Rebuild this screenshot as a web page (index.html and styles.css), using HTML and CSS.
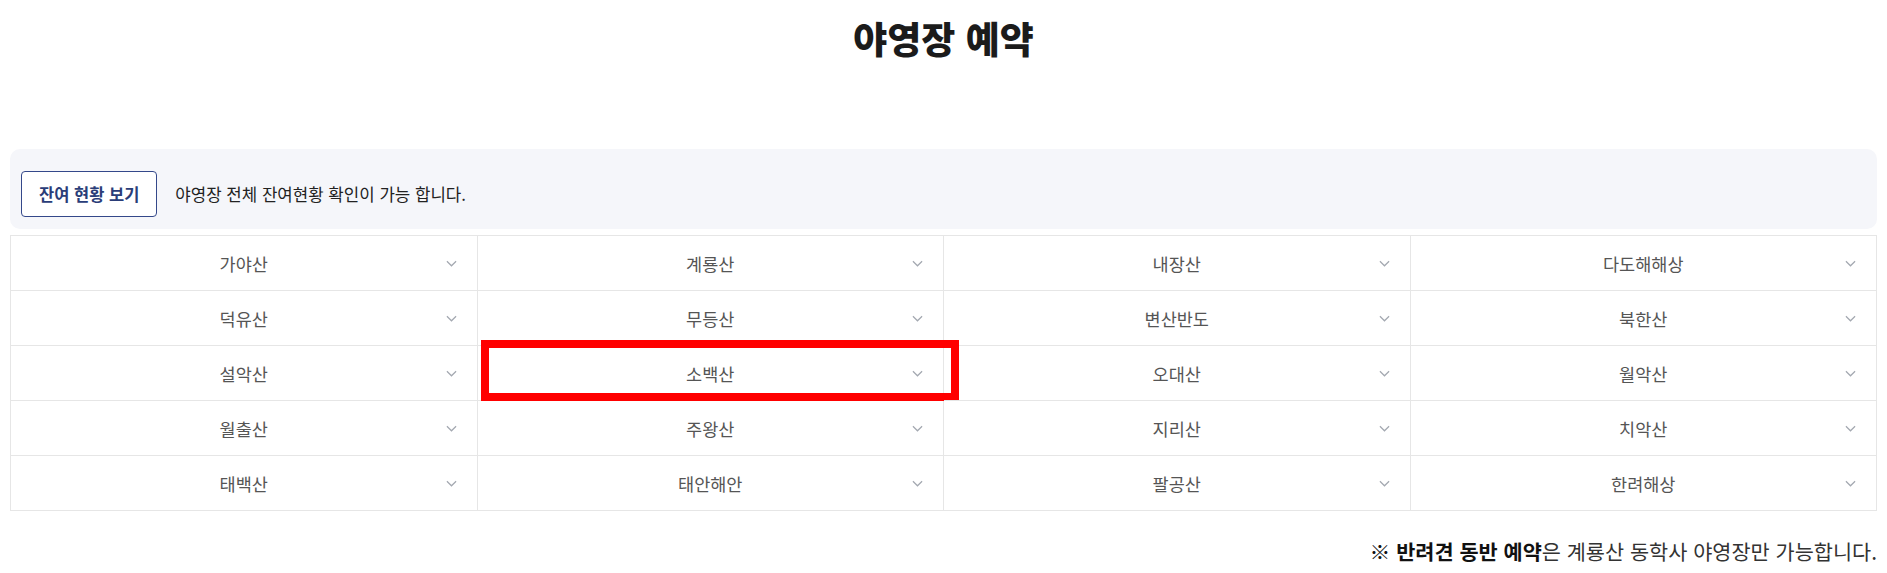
FILE: index.html
```html
<!DOCTYPE html>
<html lang="ko">
<head>
  <meta charset="UTF-8">
  <title>야영장 예약</title>
  <meta name="viewport" content="width=device-width, initial-scale=1">
  <link rel="stylesheet" href="styles.css">
</head>
<body>
  <h1>야영장 예약</h1>

  <div class="notice-bar">
    <button type="button" class="status-btn">잔여 현황 보기</button>
    <span class="notice-text">야영장 전체 잔여현황 확인이 가능 합니다.</span>
  </div>

  <div class="park-grid">
    <div class="cell"><span class="name">가야산</span><svg class="chev" viewBox="0 0 12 7"><path d="M1 1l5 5 5-5"/></svg></div>
    <div class="cell"><span class="name">계룡산</span><svg class="chev" viewBox="0 0 12 7"><path d="M1 1l5 5 5-5"/></svg></div>
    <div class="cell"><span class="name">내장산</span><svg class="chev" viewBox="0 0 12 7"><path d="M1 1l5 5 5-5"/></svg></div>
    <div class="cell"><span class="name">다도해해상</span><svg class="chev" viewBox="0 0 12 7"><path d="M1 1l5 5 5-5"/></svg></div>

    <div class="cell"><span class="name">덕유산</span><svg class="chev" viewBox="0 0 12 7"><path d="M1 1l5 5 5-5"/></svg></div>
    <div class="cell"><span class="name">무등산</span><svg class="chev" viewBox="0 0 12 7"><path d="M1 1l5 5 5-5"/></svg></div>
    <div class="cell"><span class="name">변산반도</span><svg class="chev" viewBox="0 0 12 7"><path d="M1 1l5 5 5-5"/></svg></div>
    <div class="cell"><span class="name">북한산</span><svg class="chev" viewBox="0 0 12 7"><path d="M1 1l5 5 5-5"/></svg></div>

    <div class="cell"><span class="name">설악산</span><svg class="chev" viewBox="0 0 12 7"><path d="M1 1l5 5 5-5"/></svg></div>
    <div class="cell highlighted"><span class="name">소백산</span><svg class="chev" viewBox="0 0 12 7"><path d="M1 1l5 5 5-5"/></svg><span class="mark"></span></div>
    <div class="cell"><span class="name">오대산</span><svg class="chev" viewBox="0 0 12 7"><path d="M1 1l5 5 5-5"/></svg></div>
    <div class="cell"><span class="name">월악산</span><svg class="chev" viewBox="0 0 12 7"><path d="M1 1l5 5 5-5"/></svg></div>

    <div class="cell"><span class="name">월출산</span><svg class="chev" viewBox="0 0 12 7"><path d="M1 1l5 5 5-5"/></svg></div>
    <div class="cell"><span class="name">주왕산</span><svg class="chev" viewBox="0 0 12 7"><path d="M1 1l5 5 5-5"/></svg></div>
    <div class="cell"><span class="name">지리산</span><svg class="chev" viewBox="0 0 12 7"><path d="M1 1l5 5 5-5"/></svg></div>
    <div class="cell"><span class="name">치악산</span><svg class="chev" viewBox="0 0 12 7"><path d="M1 1l5 5 5-5"/></svg></div>

    <div class="cell"><span class="name">태백산</span><svg class="chev" viewBox="0 0 12 7"><path d="M1 1l5 5 5-5"/></svg></div>
    <div class="cell"><span class="name">태안해안</span><svg class="chev" viewBox="0 0 12 7"><path d="M1 1l5 5 5-5"/></svg></div>
    <div class="cell"><span class="name">팔공산</span><svg class="chev" viewBox="0 0 12 7"><path d="M1 1l5 5 5-5"/></svg></div>
    <div class="cell"><span class="name">한려해상</span><svg class="chev" viewBox="0 0 12 7"><path d="M1 1l5 5 5-5"/></svg></div>
  </div>

  <p class="pet-note"><strong>※ 반려견 동반 예약</strong>은 계룡산 동학사 야영장만 가능합니다.</p>
</body>
</html>
```

FILE: styles.css
```css
body {
  font-family: "Noto Sans CJK KR", "Noto Sans", sans-serif;
  margin: 0;
  padding: 0 10px;
  background: #fff;
  color: #222;
}
h1 {
  text-align: center;
  font-size: 37px;
  font-weight: 900;
  line-height: 44px;
  color: #1b1b1b;
  margin: 16px 0 89px;
}

.notice-bar {
  display: flex;
  align-items: center;
  gap: 18px;
  background: #f5f6fa;
  border-radius: 10px;
  padding: 22px 11px 12px;
}
.status-btn {
  font-family: inherit;
  font-size: 16.5px;
  font-weight: 700;
  color: #2a3d78;
  background: #fff;
  border: 1px solid #34488a;
  border-radius: 4px;
  height: 46px;
  padding: 0 17px;
}
.notice-text {
  font-size: 16.8px;
  color: #222;
}

.park-grid {
  display: grid;
  grid-template-columns: repeat(4, 1fr);
  margin-top: 6px;
  border-top: 1px solid #e6e6e6;
  border-left: 1px solid #e6e6e6;
}
.cell {
  position: relative;
  display: grid;
  grid-template-columns: 1fr auto 1fr;
  align-items: center;
  height: 54px;
  border-right: 1px solid #e6e6e6;
  border-bottom: 1px solid #e6e6e6;
}
.name {
  grid-column: 2;
  font-size: 17.5px;
  color: #555;
}
.chev {
  grid-column: 3;
  justify-self: end;
  width: 11px;
  height: 7px;
  margin-right: 20px;
  fill: none;
  stroke: #a3a8b0;
  stroke-width: 1.3;
}
.mark {
  position: absolute;
  left: 3px;
  top: -6px;
  width: 462px;
  height: 45px;
  border: 8px solid #ff0000;
}

.pet-note {
  text-align: right;
  font-size: 20.8px;
  line-height: 28px;
  color: #333;
  margin: 26px 0 0;
}
.pet-note strong {
  color: #111;
  font-weight: 700;
}
```
